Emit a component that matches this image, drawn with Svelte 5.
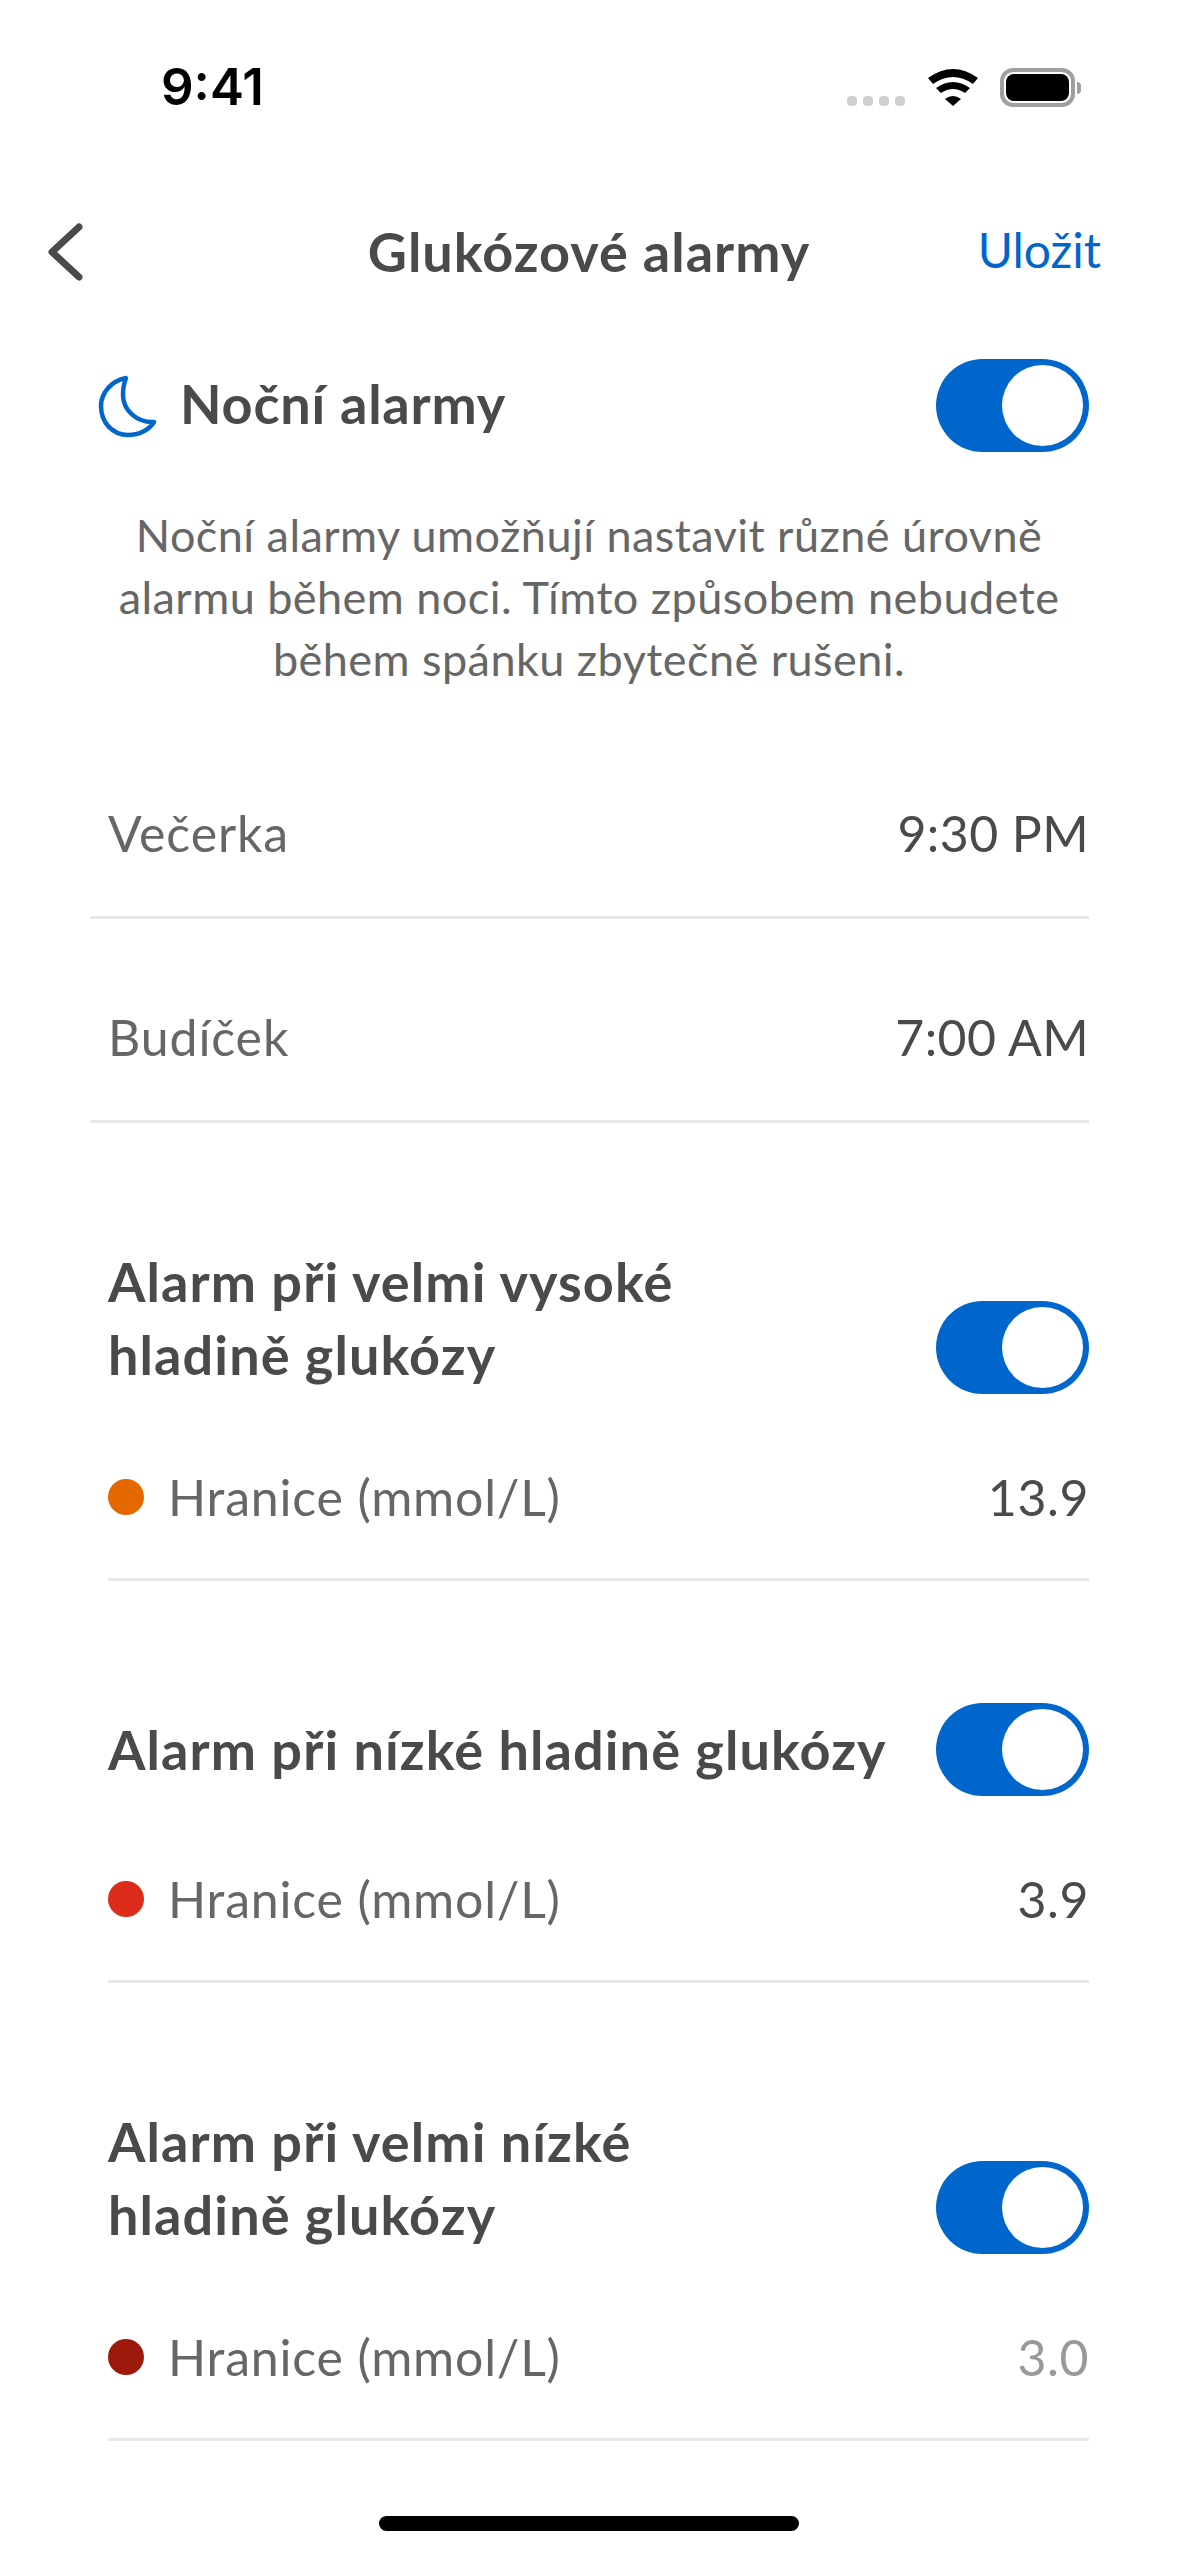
<script>
  const times = [
    { label: "Večerka", value: "9:30 PM" },
    { label: "Budíček", value: "7:00 AM" }
  ];

  const alarms = [
    { title: "Alarm při velmi vysoké\nhladině glukózy", color: "#e56700", value: "13.9", twoLine: true },
    { title: "Alarm při nízké hladině glukózy", color: "#dd2c1a", value: "3.9" },
    { title: "Alarm při velmi nízké\nhladině glukózy", color: "#9c1a0c", value: "3.0", twoLine: true, muted: true }
  ];
</script>

{#snippet toggle()}
  <div class="toggle"><span class="toggle__knob"></span></div>
{/snippet}

<div class="screen">
  <div class="status">
    <span class="status__time">9:41</span>
    <div class="status__icons">
      <div class="signal"><i></i><i></i><i></i><i></i></div>
      <svg class="wifi" width="50" height="37" viewBox="0 0 50 37">
        <path d="M0 9Q25-9 50 9L45 15Q25 1 5 15Z" />
        <path d="M8 19Q25 7 42 19L37 24Q25 16 13 24Z" />
        <path d="M17 30Q25 24 33 30L25 37Z" />
      </svg>
      <div class="battery"><span></span></div>
      <span class="battery__cap"></span>
    </div>
  </div>

  <div class="nav">
    <svg class="nav__back" width="38" height="62" viewBox="0 0 38 62">
      <path d="M33 6L6 31L33 56" />
    </svg>
    <div class="nav__title">Glukózové alarmy</div>
    <div class="nav__save">Uložit</div>
  </div>

  <div class="night">
    <svg class="night__moon" width="66" height="66" viewBox="0 0 66 66">
      <path d="M29 5C14 8 4 20 4 33C4 50 16 62 31 62C42 62 52 57 57 49C41 50 26 38 26 22C26 15 27 10 29 5Z" />
    </svg>
    <div class="night__title">Noční alarmy</div>
    {@render toggle()}
  </div>

  <p class="desc">
    Noční alarmy umožňují nastavit různé úrovně<br />
    alarmu během noci. Tímto způsobem nebudete<br />
    během spánku zbytečně rušeni.
  </p>

  <div class="times">
    {#each times as t}
      <div class="time-row">
        <span class="time-row__label">{t.label}</span>
        <span class="time-row__value">{t.value}</span>
      </div>
    {/each}
  </div>

  {#each alarms as a}
    <div class="alarm">
      <div class="alarm__head" class:alarm__head--two={a.twoLine}>
        <div class="alarm__title">{a.title}</div>
        {@render toggle()}
      </div>
      <div class="alarm__limit">
        <span class="dot" style="background: {a.color}"></span>
        <span class="alarm__label">Hranice (mmol/L)</span>
        <span class="alarm__value" class:alarm__value--muted={a.muted}>{a.value}</span>
      </div>
    </div>
  {/each}

  <div class="home-bar"></div>
</div>

<style>
  :global(body) {
    background: #fff;
  }

  .screen {
    width: 1178px;
    height: 2556px;
    overflow: hidden;
    background: #fff;
    font-family: Lato, "Open Sans", sans-serif;
    color: #4a4a4a;
  }

  .status {
    height: 176px;
    display: flex;
    justify-content: space-between;
    align-items: flex-start;
    padding: 0 97px 0 161px;
    box-sizing: border-box;
  }
  .status__time {
    margin-top: 56px;
    font-family: Inter, sans-serif;
    font-weight: 600;
    font-size: 51px;
    line-height: 62px;
    color: #000;
  }
  .status__icons {
    margin-top: 68px;
    display: flex;
    align-items: flex-end;
    height: 39px;
  }
  .signal {
    display: flex;
    gap: 6px;
    margin-right: 23px;
    margin-bottom: 1px;
  }
  .signal i {
    width: 10px;
    height: 10px;
    border-radius: 4px;
    background: #cfcfcf;
  }
  .wifi {
    fill: #000;
    margin-right: 22px;
    margin-bottom: 1px;
  }
  .battery {
    width: 75px;
    height: 39px;
    box-sizing: border-box;
    border: 4px solid #a0a0a0;
    border-radius: 13px;
    padding: 2px;
  }
  .battery span {
    display: block;
    height: 100%;
    background: #000;
    border-radius: 8px;
  }
  .battery__cap {
    width: 4px;
    height: 12px;
    margin: 0 0 13px 2px;
    background: #a0a0a0;
    border-radius: 0 6px 6px 0;
  }

  .nav {
    height: 152px;
    display: grid;
    grid-template-columns: 1fr auto 1fr;
    align-items: center;
    padding: 0 77px;
  }
  .nav__back {
    margin-left: -31px;
    fill: none;
    stroke: #4a4a4a;
    stroke-width: 7;
    stroke-linecap: round;
    stroke-linejoin: round;
  }
  .nav__title {
    font-size: 54px;
    font-weight: 700;
    letter-spacing: 1px;
    line-height: 62px;
    margin-top: -1px;
  }
  .nav__save {
    justify-self: end;
    font-size: 48px;
    line-height: 62px;
    color: #0066cc;
    margin-top: -4px;
  }

  .night {
    margin-top: 31px;
    display: flex;
    align-items: center;
    padding: 0 89px 0 97px;
    height: 93px;
  }
  .night__moon {
    fill: none;
    stroke: #0066cc;
    stroke-width: 4.5;
    stroke-linejoin: round;
    margin-right: 17px;
  }
  .night__title {
    flex: 1;
    font-size: 54px;
    font-weight: 700;
    letter-spacing: 0.8px;
    margin-top: -4px;
  }

  .toggle {
    width: 153px;
    height: 93px;
    flex: none;
    box-sizing: border-box;
    padding: 6px;
    border-radius: 47px;
    background: #0066cc;
    display: flex;
    justify-content: flex-end;
  }
  .toggle__knob {
    width: 81px;
    height: 81px;
    border-radius: 50%;
    background: #fff;
  }

  .desc {
    margin: 52px 0 0;
    text-align: center;
    font-size: 45px;
    letter-spacing: 0.45px;
    line-height: 62px;
    color: #666;
  }

  .times {
    margin: 25px 89px 0 90px;
  }
  .time-row {
    display: flex;
    justify-content: space-between;
    padding: 88px 0 53px 18px;
    line-height: 60px;
    border-bottom: 3px solid #e8e8e8;
  }
  .time-row__label {
    font-size: 50px;
    letter-spacing: 0.9px;
    color: #666;
  }
  .time-row__value {
    font-size: 50px;
    letter-spacing: 0.4px;
  }

  .alarm {
    margin: 122px 89px 0 108px;
    border-bottom: 3px solid #e8e8e8;
    padding-bottom: 51px;
  }
  .alarm__head {
    display: flex;
    align-items: center;
    justify-content: space-between;
  }
  .alarm__head--two {
    align-items: flex-end;
  }
  .alarm__title {
    font-size: 54px;
    font-weight: 700;
    letter-spacing: 1.1px;
    line-height: 73px;
    white-space: pre-line;
  }
  .alarm__head--two .alarm__title {
    margin-bottom: 3px;
  }
  .alarm__limit {
    margin-top: 73px;
    display: flex;
    align-items: center;
    line-height: 60px;
  }
  .dot {
    width: 36px;
    height: 36px;
    border-radius: 50%;
    margin-right: 24px;
  }
  .alarm__label {
    flex: 1;
    font-size: 50px;
    letter-spacing: 0.8px;
    color: #666;
  }
  .alarm__value {
    font-size: 50px;
    letter-spacing: 0.6px;
  }
  .alarm__value--muted {
    color: #999;
  }

  .home-bar {
    width: 420px;
    height: 15px;
    margin: 75px auto 0;
    border-radius: 8px;
    background: #000;
  }
</style>
